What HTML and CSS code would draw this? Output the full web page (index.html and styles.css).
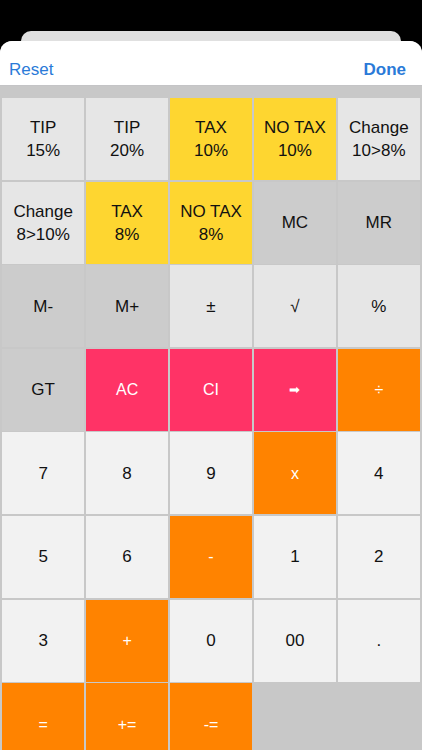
FILE: index.html
```html
<!DOCTYPE html>
<html>
<head>
<meta charset="utf-8">
<link rel="stylesheet" href="styles.css">
</head>
<body>
<div class="screen">
  <div class="backcard"></div>
  <div class="sheet">
    <div class="nav">
      <span class="nav-btn">Reset</span>
      <span class="nav-btn bold">Done</span>
    </div>
    <div class="pad">
      <div class="key lt">TIP<br>15%</div>
      <div class="key lt">TIP<br>20%</div>
      <div class="key yl">TAX<br>10%</div>
      <div class="key yl">NO TAX<br>10%</div>
      <div class="key lt">Change<br>10&gt;8%</div>

      <div class="key lt">Change<br>8&gt;10%</div>
      <div class="key yl">TAX<br>8%</div>
      <div class="key yl">NO TAX<br>8%</div>
      <div class="key dk">MC</div>
      <div class="key dk">MR</div>

      <div class="key dk">M-</div>
      <div class="key dk">M+</div>
      <div class="key lt">±</div>
      <div class="key lt">√</div>
      <div class="key lt">%</div>

      <div class="key dk">GT</div>
      <div class="key pk">AC</div>
      <div class="key pk">CI</div>
      <div class="key pk arrow">➡</div>
      <div class="key or">÷</div>

      <div class="key wh">7</div>
      <div class="key wh">8</div>
      <div class="key wh">9</div>
      <div class="key or">x</div>
      <div class="key wh">4</div>

      <div class="key wh">5</div>
      <div class="key wh">6</div>
      <div class="key or">-</div>
      <div class="key wh">1</div>
      <div class="key wh">2</div>

      <div class="key wh">3</div>
      <div class="key or">+</div>
      <div class="key wh">0</div>
      <div class="key wh">00</div>
      <div class="key wh">.</div>

      <div class="key or">=</div>
      <div class="key or">+=</div>
      <div class="key or">-=</div>
    </div>
  </div>
</div>
</body>
</html>
```

FILE: styles.css
```css
html, body {
  margin: 0;
  padding: 0;
  background: #000;
}
body {
  width: 422px;
  height: 750px;
  overflow: hidden;
  font-family: "Liberation Sans", Arial, sans-serif;
}
.screen {
  position: relative;
  width: 422px;
  height: 750px;
  background: #000;
  padding-top: 31px;
  box-sizing: border-box;
}
.backcard {
  margin: 0 21px;
  height: 20px;
  background: #e0e0e0;
  border-radius: 10px 10px 0 0;
}
.sheet {
  margin-top: -10px;
  background: #c6c6c8;
  border-radius: 12px 12px 0 0;
  overflow: hidden;
  height: 709px;
}
.nav {
  height: 45px;
  background: #fff;
  border-bottom: 1px solid #c4c4c6;
  display: flex;
  justify-content: space-between;
  align-items: center;
  padding: 13px 16px 0 9px;
  box-sizing: border-box;
}
.nav-btn {
  font-size: 17px;
  color: #2a7ad8;
}
.nav-btn.bold {
  font-weight: bold;
}
.pad {
  display: grid;
  grid-template-columns: repeat(5, 1fr);
  grid-auto-rows: 82px;
  gap: 1.6px;
  padding: 12px 2px 0 2px;
  background: #c8c8c8;
  height: 100%;
}
.key {
  display: flex;
  align-items: center;
  justify-content: center;
  text-align: center;
  font-size: 17px;
  line-height: 23px;
  color: #111;
}
.lt { background: #e6e6e6; }
.yl { background: #fed630; }
.dk { background: #cccccc; }
.wh { background: #f2f2f2; }
.pk { background: #ff3366; color: #fff; font-size: 16px; }
.or { background: #ff8300; color: #fff; font-size: 16px; }
.arrow { font-size: 13px; }
```
